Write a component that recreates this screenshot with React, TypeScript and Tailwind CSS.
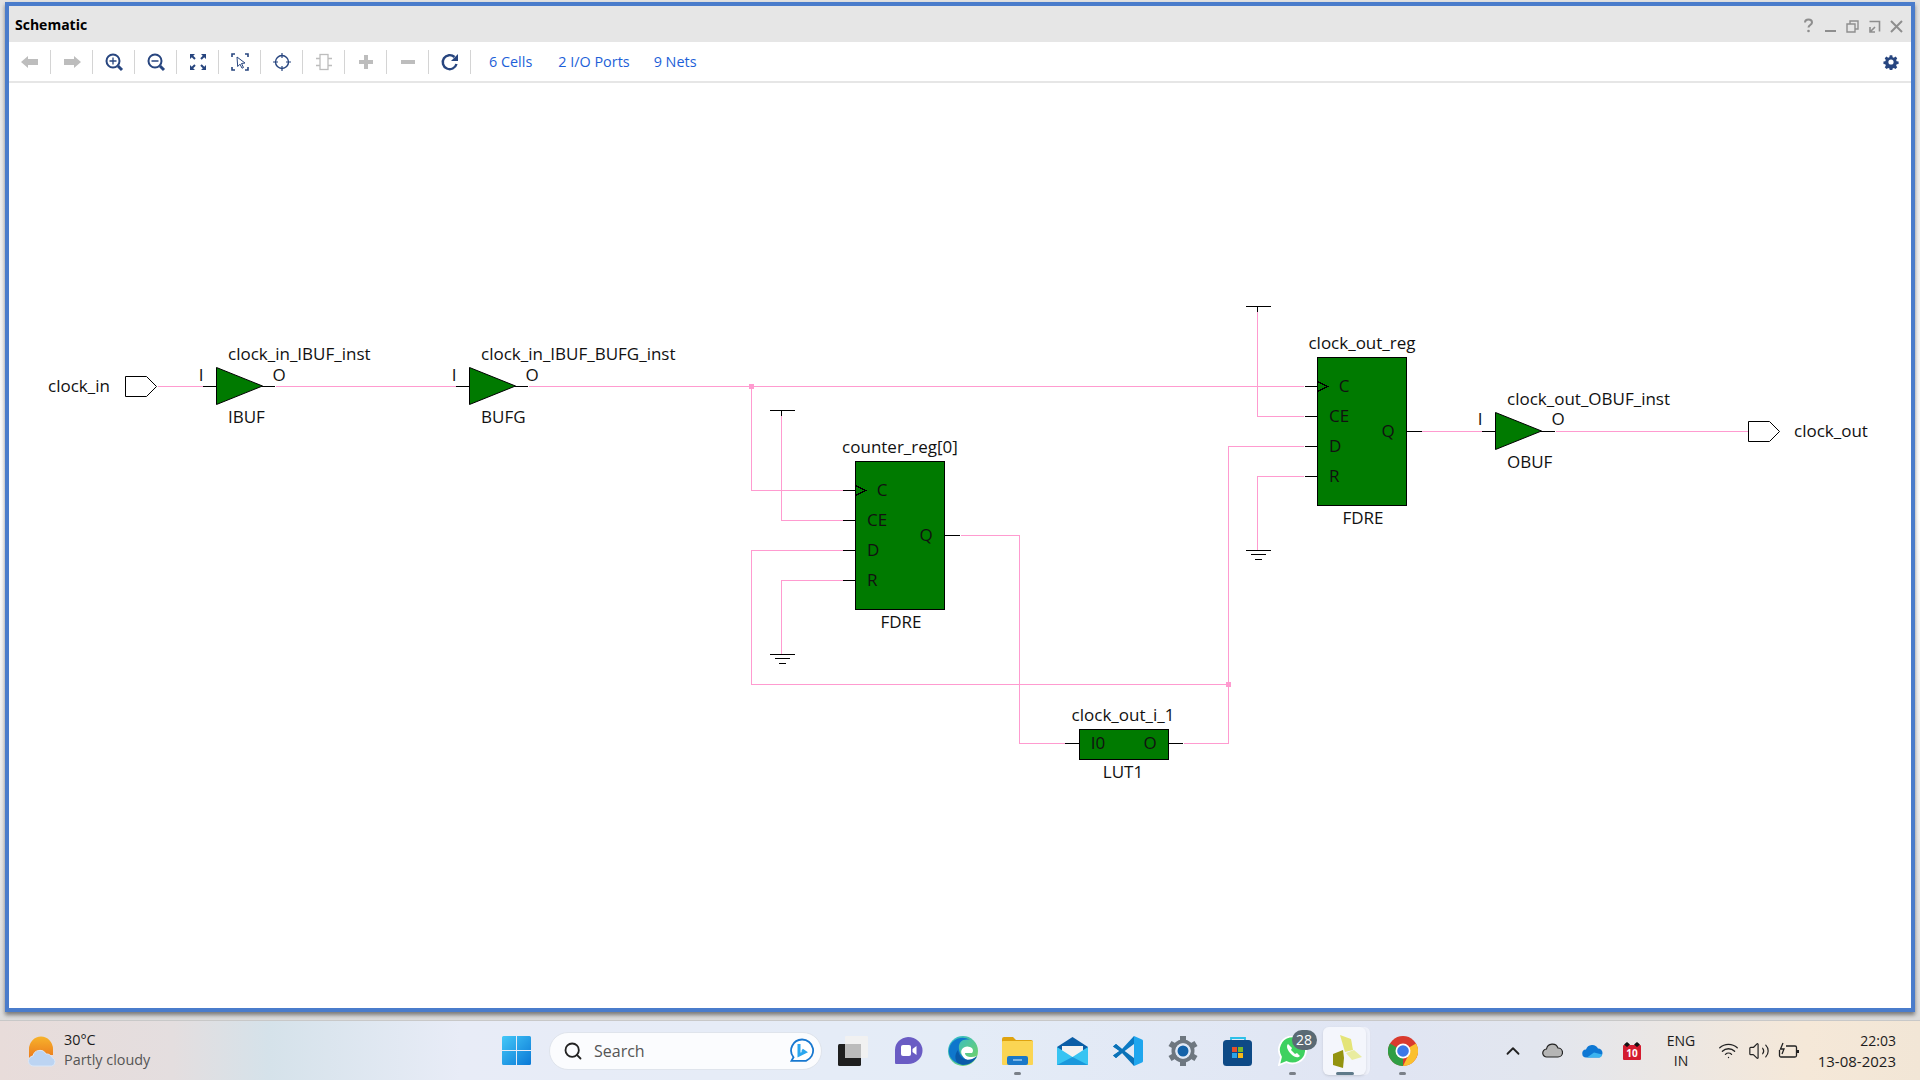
import type { ReactNode } from "react";
import { ChevronUp, Search, Volume2, Wifi } from "lucide-react";

const FONT = "font-['Open_Sans','Noto_Sans',sans-serif]";
const BLUE = "#27457f";
const GREY = "#bdbdbd";
const PINK = "#ff9bd0";

function Ico({ children, color = BLUE }: { children: ReactNode; color?: string }) {
  return (
    <svg width="20" height="20" viewBox="0 0 20 20" fill="none" stroke={color} strokeWidth="2">
      {children}
    </svg>
  );
}

const toolIcons: ReactNode[] = [
  <Ico color={GREY}><path d="M1 10l7-6v3h10v6H8v3z" fill={GREY} stroke="none" /></Ico>,
  <Ico color={GREY}><path d="M19 10l-7-6v3H2v6h10v3z" fill={GREY} stroke="none" /></Ico>,
  <Ico><circle cx="9" cy="9" r="6.5" /><path d="M14 14l4 4" strokeWidth="3" /><path d="M9 5.5v7M5.5 9h7" strokeWidth="1.3" /></Ico>,
  <Ico><circle cx="9" cy="9" r="6.5" /><path d="M14 14l4 4" strokeWidth="3" /><path d="M5.5 9h7" strokeWidth="1.5" /></Ico>,
  <Ico><path d="M2 2h5l-5 5zM18 2h-5l5 5zM2 18h5l-5-5zM18 18h-5l5-5z" fill={BLUE} stroke="none" /><path d="M4 4l3 3M16 4l-3 3M4 16l3-3M16 16l-3-3" /></Ico>,
  <Ico><path d="M5 2H2v3M15 2h3v3M5 18H2v-3M15 18h3v-3" strokeWidth="1.6" /><path d="M7 5l8 6-3.5.5 2 4-1.5.7-2-4-2.3 2.3z" strokeWidth="1" /></Ico>,
  <Ico><circle cx="10" cy="10" r="6.5" strokeWidth="1.4" /><path d="M10 1v5M10 14v5M1 10h5M14 10h5" strokeWidth="1.2" /></Ico>,
  <Ico color={GREY}><rect x="6" y="2.5" width="8" height="15" strokeWidth="1.3" /><path d="M2 6.5h4M2 13.5h4M14 6.5h4M14 13.5h4" strokeWidth="1.6" /></Ico>,
  <Ico color={GREY}><path d="M10 3v14M3 10h14" strokeWidth="4" /></Ico>,
  <Ico color={GREY}><path d="M3 10h14" strokeWidth="4" /></Ico>,
  <Ico><path d="M16.5 12a7 7 0 1 1-2-7" strokeWidth="2.4" /><path d="M18 2v7h-7z" fill={BLUE} stroke="none" /></Ico>,
];

// [x1,y1,x2,y2,...] polylines in page coordinates
const wires = [
  "157,386 203,386",
  "275,386 455,386",
  "528,386 1303,386",
  "751,386 751,490 842,490",
  "781,415 781,520 842,520",
  "842,550 751,550 751,684 1228,684",
  "842,580 781,580 781,654",
  "960,535 1019,535 1019,743 1065,743",
  "1183,743 1228,743 1228,446 1303,446",
  "1257,311 1257,416 1303,416",
  "1303,476 1257,476 1257,550",
  "1421,431 1482,431",
  "1555,431 1748,431",
];

const labels: [string, number, number, "start" | "middle"][] = [
  ["clock_in", 48, 386, "start"],
  ["I", 201, 375, "middle"],
  ["O", 279, 375, "middle"],
  ["clock_in_IBUF_inst", 228, 354, "start"],
  ["IBUF", 228, 417, "start"],
  ["I", 454, 375, "middle"],
  ["O", 532, 375, "middle"],
  ["clock_in_IBUF_BUFG_inst", 481, 354, "start"],
  ["BUFG", 481, 417, "start"],
  ["counter_reg[0]", 900, 447, "middle"],
  ["C", 882, 490, "middle"],
  ["CE", 867, 520, "start"],
  ["D", 867, 550, "start"],
  ["R", 867, 580, "start"],
  ["Q", 926, 535, "middle"],
  ["FDRE", 901, 622, "middle"],
  ["clock_out_reg", 1362, 343, "middle"],
  ["C", 1344, 386, "middle"],
  ["CE", 1329, 416, "start"],
  ["D", 1329, 446, "start"],
  ["R", 1329, 476, "start"],
  ["Q", 1388, 431, "middle"],
  ["FDRE", 1363, 518, "middle"],
  ["clock_out_i_1", 1123, 715, "middle"],
  ["I0", 1098, 743, "middle"],
  ["O", 1150, 743, "middle"],
  ["LUT1", 1123, 772, "middle"],
  ["I", 1480, 419, "middle"],
  ["O", 1558, 419, "middle"],
  ["clock_out_OBUF_inst", 1507, 399, "start"],
  ["OBUF", 1507, 462, "start"],
  ["clock_out", 1794, 431, "start"],
];

function Vcc({ x, y }: { x: number; y: number }) {
  return <path d={`M${x - 12} ${y}h25M${x} ${y}v5`} stroke="#000" />;
}

function Gnd({ x, y }: { x: number; y: number }) {
  return <path d={`M${x - 12} ${y}h25M${x - 7} ${y + 4}h15M${x - 3} ${y + 9}h7`} stroke="#000" />;
}

function Buf({ x }: { x: number; y?: number }) {
  return <path d={`M${x} 367.5L${x + 46} 386L${x} 404.5Z`} fill="#007a00" stroke="#000" />;
}

function Flop({ x, y }: { x: number; y: number }) {
  return (
    <g stroke="#000">
      <rect x={x} y={y} width="89" height="148" fill="#007a00" />
      <path d={`M${x - 13} ${y + 29}h13M${x - 13} ${y + 59}h13M${x - 13} ${y + 89}h13M${x - 13} ${y + 119}h13M${x + 89} ${y + 74}h15`} />
      <path d={`M${x} ${y + 24}l10 5l-10 5`} fill="none" />
    </g>
  );
}

function Schematic() {
  return (
    <svg viewBox="9 83 1902 925" className={`w-full h-full ${FONT}`} shapeRendering="crispEdges">
      {wires.map((p, i) => (
        <polyline key={i} points={p.split(" ").map((c) => c.split(",").map((n) => Number(n) + 0.5).join(",")).join(" ")} fill="none" stroke={PINK} />
      ))}
      <rect x="749" y="384" width="5" height="5" fill={PINK} />
      <rect x="1226" y="682" width="5" height="5" fill={PINK} />

      <g shapeRendering="auto">
        <path d="M125.5 376.5h21l10 10l-10 10h-21z" fill="#fff" stroke="#000" />
        <path d="M1748.5 421.5h21l10 10l-10 10h-21z" fill="#fff" stroke="#000" />
        <Buf x={216.5} />
        <Buf x={469.5} />
        <g transform="translate(1278 45)"><Buf x={217.5} /></g>
      </g>
      <path d="M203 386.5h13M262 386.5h13M456 386.5h14M515 386.5h13M1482 431.5h13M1540 431.5h15M1065 743.5h14M1168 743.5h15" stroke="#000" />
      <Flop x={855.5} y={461.5} />
      <Flop x={1317.5} y={357.5} />
      <rect x="1079.5" y="729.5" width="89" height="30" fill="#007a00" stroke="#000" />
      <g transform="translate(0.5 0.5)">
        <Vcc x={781} y={410} />
        <Gnd x={781} y={654} />
        <Vcc x={1257} y={306} />
        <Gnd x={1257} y={550} />
      </g>

      <g shapeRendering="auto" fontSize="17" fill="#111" transform="translate(0 -1)">
        {labels.map(([t, x, y, anchor], i) => (
          <text key={i} x={x} y={y} textAnchor={anchor} dominantBaseline="central">{t}</text>
        ))}
      </g>
    </svg>
  );
}

function Sep() {
  return <div className="w-px h-6 bg-[#d4d4d4]" />;
}

function Toolbar() {
  return (
    <div className="h-[39px] shrink-0 flex items-center bg-white pr-[12px]">
      {toolIcons.map((icon, i) => (
        <div key={i} className="flex items-center">
          <div className="w-[41px] flex justify-center">{icon}</div>
          <Sep />
        </div>
      ))}
      <div className={`flex items-center ml-[18px] text-[14.4px] text-[#1d5fd8] ${FONT}`}>
        <span>6 Cells</span>
        <span className="ml-[26px]">2 I/O Ports</span>
        <span className="ml-[24px]">9 Nets</span>
      </div>
      <svg className="ml-auto" width="16" height="16" viewBox="0 0 16 16">
        <path d="M6.5 0h3l.4 2.200 1.500.6L13.300 1.500l2.100 2.100-1.300 1.900.6 1.500 2.300.4v3l-2.300.4-.6 1.500 1.300 1.900-2.100 2.100-1.900-1.300-1.500.6-.4 2.300h-3l-.4-2.300-1.500-.6-1.900 1.300L.5 14.200l1.300-1.900-.6-1.500L-1 10.400v-3l2.200-.4.600-1.500L.5 3.600l2.100-2.100 1.900 1.300 1.500-.6z" transform="translate(1.300 1.300) scale(.84)" fill={BLUE} />
        <circle cx="8" cy="8" r="2.600" fill="#fff" />
      </svg>
    </div>
  );
}

function TitleBar() {
  return (
    <div className="h-[36px] shrink-0 flex items-center justify-between bg-[#e6e6e6] pl-[6px] pr-[5px]">
      <span className={`text-[14px] font-bold text-black ${FONT}`}>Schematic</span>
      <svg width="105" height="18" viewBox="0 0 105 18" fill="none" stroke="#8e8e8e" strokeWidth="1.6">
        <path d="M4 7.500c0-4 7-4 7 0c0 2.500-3.500 2.500-3.500 5" strokeWidth="2" />
        <circle cx="7.500" cy="16" r="1.300" fill="#8e8e8e" stroke="none" />
        <path d="M24 16h11" strokeWidth="2" />
        <path d="M46 9h8v8h-8zM49 9V6h8v8h-3" strokeWidth="1.400" />
        <path d="M68.500 6.500h10v10M69 17l5-5M69 12v5h5" strokeWidth="1.600" />
        <path d="M90 6l11 11M101 6L90 17" strokeWidth="2" />
      </svg>
    </div>
  );
}

function Tile({ children, dot, wide }: { children: ReactNode; dot?: boolean; wide?: boolean }) {
  return (
    <div className="relative w-[55px] h-[60px] flex items-center justify-center">
      {wide && <div className="absolute left-[3px] top-[6px] w-[48px] h-[48px] rounded-md bg-[#eef1fa] border-r border-[#dfe3f0]" />}
      {wide && <div className="absolute left-[3px] top-[6px] w-[43px] h-[48px] rounded-md bg-[#f4f6fc] shadow-sm" />}
      <div className="relative">{children}</div>
      {dot && <div className="absolute bottom-[6px] left-[24px] w-[7px] h-[3px] rounded-full bg-[#7a8088]" />}
      {wide && <div className="absolute bottom-[6px] left-[16px] w-[18px] h-[3px] rounded-full bg-[#5f7a8a]" />}
    </div>
  );
}

function WeatherIcon() {
  return (
    <svg width="28" height="32" viewBox="0 0 28 32">
      <defs>
        <linearGradient id="sun" x1="0" y1="0" x2="0" y2="1">
          <stop offset="0" stopColor="#f7b32b" />
          <stop offset="1" stopColor="#ec7a1d" />
        </linearGradient>
      </defs>
      <path d="M1 14a12 12.500 0 0 1 24 0v6H6l-5 3z" fill="url(#sun)" />
      <path d="M6 31a5 5 0 0 1-1-10a7 7 0 0 1 13-2a6 6 0 0 1 6 3.500a4.500 4.500 0 0 1 0 8.500z" fill="#bcd4f2" stroke="#d9e7f8" />
    </svg>
  );
}

function Taskbar() {
  return (
    <div className={`h-[60px] shrink-0 flex items-center border-t border-[#c8c8c8] bg-[linear-gradient(90deg,#e8dcda_0%,#e4dedf_9%,#d5e2ea_14%,#e8ecf7_24%,#e4ecf7_50%,#e0e5f3_72%,#e2e6ef_80%,#f5e8d8_94%,#f2e6d6_100%)] text-[#1c1c1c] ${FONT}`}>
      <div className="w-[489px] shrink-0 flex items-center pl-[28px]">
        <WeatherIcon />
        <div className="ml-[8px] mb-[2px] text-[14.4px] leading-[20px]">
          <div>30°C</div>
          <div className="text-[#555]">Partly cloudy</div>
        </div>
      </div>

      <Tile>
        <svg width="29" height="29" viewBox="0 0 29 29">
          <defs>
            <linearGradient id="win" x1="0" y1="0" x2="1" y2="1">
              <stop offset="0" stopColor="#44c8f8" />
              <stop offset="1" stopColor="#0a78d6" />
            </linearGradient>
          </defs>
          <path d="M0 1.500Q0 0 1.500 0H14v14H0zM15 0h12.500Q29 0 29 1.500V14H15zM0 15h14v14H1.500Q0 29 0 27.500zM15 15h14v12.500Q29 29 27.500 29H15z" fill="url(#win)" />
        </svg>
      </Tile>

      <div className="w-[273px] h-[38px] ml-[5px] shrink-0 flex items-center rounded-full bg-[#fbfcfe] border border-[#dfe4ec] pl-[13px] pr-[6px]">
        <Search size={20} strokeWidth={2.2} className="text-[#222]" />
        <span className="ml-[11px] text-[16px] text-[#555]">Search</span>
        <svg className="ml-auto" width="26" height="26" viewBox="0 0 26 26" fill="none">
          <path d="M13 1.500a11 11 0 0 1 4 21.300H2.500l2-3.500A11 11 0 0 1 13 1.500z" stroke="#1878d0" strokeWidth="1.800" fill="#fff" />
          <path d="M10 6v11l6-3-3-2" stroke="#2aa6ee" strokeWidth="3" />
        </svg>
      </div>

      <div className="ml-[3px] flex">
        <Tile>
          <svg width="30" height="30" viewBox="0 0 30 30">
            <rect x="7" y="0" width="23" height="22" rx="1" fill="#f1f1f1" />
            <rect x="0" y="8" width="23" height="22" rx="1.500" fill="#1f1f1f" />
            <rect x="7" y="8" width="16" height="14" fill="#bcbcbc" />
          </svg>
        </Tile>
        <Tile>
          <svg width="30" height="30" viewBox="0 0 30 30">
            <path d="M15 1a14 13 0 0 1 0 27H3q-1 0-1-1.500V14A14 13 0 0 1 15 1z" fill="#6a5cc4" />
            <rect x="8" y="9" width="10" height="11" rx="2" fill="#fff" />
            <path d="M19.500 13l4-3v9l-4-3z" fill="#fff" />
          </svg>
        </Tile>
        <Tile>
          <svg width="30" height="30" viewBox="0 0 30 30">
            <defs>
              <linearGradient id="edgeA" x1="0" y1="0" x2="1" y2="1">
                <stop offset="0" stopColor="#2ab8d8" />
                <stop offset="1" stopColor="#7ad65a" />
              </linearGradient>
            </defs>
            <circle cx="15" cy="15" r="15" fill="url(#edgeA)" />
            <path d="M1 13C3 3 14-1 22 4c-8-2-12 3-11 9 1 8 9 14 18 7-4 8-13 11-20 7C3 24 0 19 1 13z" fill="#0f77cc" />
            <path d="M14 19c-3-6 3-10 8-8 3 1 4 4 2 6h-7c0 4 6 5 12 3-5 7-12 5-15-1z" fill="#fff" />
            <path d="M10 14c1 8 9 14 19 6-4 8-13 11-19 7-3-2-4-8 0-13z" fill="#0a5aa8" />
          </svg>
        </Tile>
        <Tile dot>
          <svg width="31" height="28" viewBox="0 0 31 28">
            <path d="M0 2q0-2 2-2h9l3 3h15q2 0 2 2v4H0z" fill="#dfa30f" />
            <rect x="0" y="4" width="31" height="24" rx="1" fill="#fbd553" />
            <rect x="5" y="19" width="21" height="9" rx="2" fill="#1a78c8" />
            <path d="M11 23h9" stroke="#bfe0f8" strokeWidth="1.200" />
          </svg>
        </Tile>
        <Tile>
          <svg width="31" height="28" viewBox="0 0 31 28">
            <path d="M15.500 0L31 10v3H0v-3z" fill="#0c5ea6" />
            <path d="M5 9h21v8l-10.500 5L5 17z" fill="#f2f2f2" />
            <path d="M0 10l15.500 10L31 10v18H0z" fill="#38c4f2" />
            <path d="M0 28l15.500-8L31 28z" fill="#1a98dc" />
          </svg>
        </Tile>
        <Tile>
          <svg width="30" height="30" viewBox="0 0 30 30">
            <path d="M21 0l8 3.500a1.500 1.500 0 0 1 1 1.400v20.200a1.500 1.500 0 0 1-1 1.400L21 30z" fill="#1fa6ee" />
            <path d="M21 0v8L9 17 3 22l-3-2.500L6.500 15 0 10.500 3 8l6 5z" fill="#0b7ac4" />
            <path d="M21 30v-8L9 13 3 8l-3 2.500L6.500 15 0 19.500 3 22l6-5 12 13z" fill="#0b72b8" />
          </svg>
        </Tile>
        <Tile>
          <svg width="30" height="30" viewBox="0 0 30 30">
            <circle cx="15" cy="15" r="11.500" fill="#6e7780" />
            <g stroke="#6e7780" strokeWidth="6">
              <path d="M15 0v30M2 7.500l26 15M28 7.500l-26 15" />
            </g>
            <circle cx="15" cy="15" r="7.500" fill="#e8effa" />
            <circle cx="15" cy="15" r="5.500" fill="#1462a8" />
            <circle cx="15" cy="15" r="7" fill="none" stroke="#dfe8f5" strokeWidth="1.500" />
          </svg>
        </Tile>
        <Tile>
          <svg width="30" height="30" viewBox="0 0 30 30">
            <path d="M8 5V2h14v3" fill="none" stroke="#2dc0e8" strokeWidth="1.800" />
            <rect x="0" y="4" width="29" height="26" rx="3.500" fill="#0e4a86" />
            <rect x="9" y="11" width="5" height="5" fill="#e8502a" />
            <rect x="15" y="11" width="5" height="5" fill="#7ab92a" />
            <rect x="9" y="17" width="5" height="5" fill="#2aa4e8" />
            <rect x="15" y="17" width="5" height="5" fill="#f8b818" />
          </svg>
        </Tile>
        <Tile dot>
          <svg width="30" height="30" viewBox="0 0 30 30">
            <path d="M1 29l2-8A13.500 13.500 0 1 1 8.500 26z" fill="#3ed160" stroke="#fff" strokeWidth="1.800" />
            <path d="M10 8c-2 2-1 6 3 10s7 4 9 2l-3-3-2 1-4-4 1-2z" fill="#fff" />
          </svg>
          <div className="absolute z-10 -top-[6px] left-[14px] w-[25px] h-[20px] rounded-full bg-[#5a6a74] text-white text-[14px] leading-[20px] text-center">28</div>
        </Tile>
        <Tile wide>
          <svg width="29" height="34" viewBox="0 0 29 34">
            <path d="M7 1l11 4 2 11-8 2z" fill="#e4e478" />
            <path d="M13 19l8-3 8 7-10 3z" fill="#e9eca0" />
            <path d="M0 20l10-4 1 8-1 10-10-3z" fill="#93930f" />
          </svg>
        </Tile>
        <Tile dot>
          <svg width="30" height="30" viewBox="0 0 30 30">
            <circle cx="15" cy="15" r="15" fill="#d93a2e" />
            <path d="M15 15L2 7.500A15 15 0 0 0 15 30z" fill="#2f9e44" />
            <path d="M15 15l13-7.500A15 15 0 0 1 15 30l7.500-15z" fill="#fbc02d" />
            <circle cx="15" cy="15" r="7.500" fill="#fff" />
            <circle cx="15" cy="15" r="5.800" fill="#3b78e7" />
          </svg>
        </Tile>
      </div>

      <div className="ml-[72px] flex items-center">
        <ChevronUp size={22} strokeWidth={2} className="text-[#222]" />
        <svg className="ml-[18px]" width="21" height="15" viewBox="0 0 21 15">
          <path d="M5 14a4 4 0 0 1-.5-8A6 6 0 0 1 16 5a4.500 4.500 0 0 1 0 9z" fill="#b5b5b5" stroke="#222" strokeWidth="1.200" />
        </svg>
        <svg className="ml-[19px]" width="21" height="14" viewBox="0 0 21 14">
          <path d="M4.500 13.500a4 4 0 0 1-.5-8A6.500 6.500 0 0 1 16 4.500a4.500 4.500 0 0 1 0 9z" fill="#0f78d4" />
          <path d="M5 13.500l7-5 8 2a3 3 0 0 1-4 3z" fill="#3cb4f0" />
        </svg>
        <svg className="ml-[19px]" width="20" height="18" viewBox="0 0 20 18">
          <rect x="1" y="3" width="18" height="15" rx="1" fill="#d41c30" />
          <path d="M5 0l3 2.500L5 5 2 2.500zM15 0l3 2.500L15 5l-3-2.500z" fill="#111" />
          <text x="10" y="15" fontSize="10" fontWeight="700" textAnchor="middle" fill="#fff">10</text>
        </svg>
        <div className="w-[44px] ml-[17px] text-center text-[14px] leading-[20px]">
          <div>ENG</div>
          <div>IN</div>
        </div>
        <Wifi size={21} strokeWidth={1.500} className="ml-[15px] text-[#222]" />
        <Volume2 size={22} strokeWidth={1.300} className="ml-[9px] text-[#222]" />
        <svg className="ml-[8px]" width="22" height="18" viewBox="0 0 22 18" fill="none" stroke="#222" strokeWidth="1.300">
          <path d="M8 4h9a1.500 1.500 0 0 1 1.500 1.500v8a1.500 1.500 0 0 1-1.500 1.500H3a1.500 1.500 0 0 1-1.500-1.500V8" />
          <path d="M20 8v3" strokeWidth="2" />
          <path d="M5 1L2.500 7H6l-2 5" />
        </svg>
        <div className="w-[96px] text-right leading-[20px]">
          <div className="text-[14px]">22:03</div>
          <div className="text-[15px]">13-08-2023</div>
        </div>
      </div>
    </div>
  );
}

export default function App() {
  return (
    <div className="w-[1920px] h-[1080px] overflow-hidden flex flex-col bg-[#f6f6f6]">
      <div className="flex-1 min-h-0 pt-[2px] px-[5px] pb-[8px] bg-gradient-to-b from-[#e2e2e2] via-white to-[#dcdcdc]">
        <div className="h-full flex flex-col border-4 border-[#4a7ccb] bg-white shadow-[0_3px_4px_rgba(0,0,0,0.45)]">
          <TitleBar />
          <Toolbar />
          <div className="h-[2px] shrink-0 bg-[#e6e6e6]" />
          <div className="flex-1 min-h-0 bg-white">
            <Schematic />
          </div>
        </div>
      </div>
      <Taskbar />
    </div>
  );
}
